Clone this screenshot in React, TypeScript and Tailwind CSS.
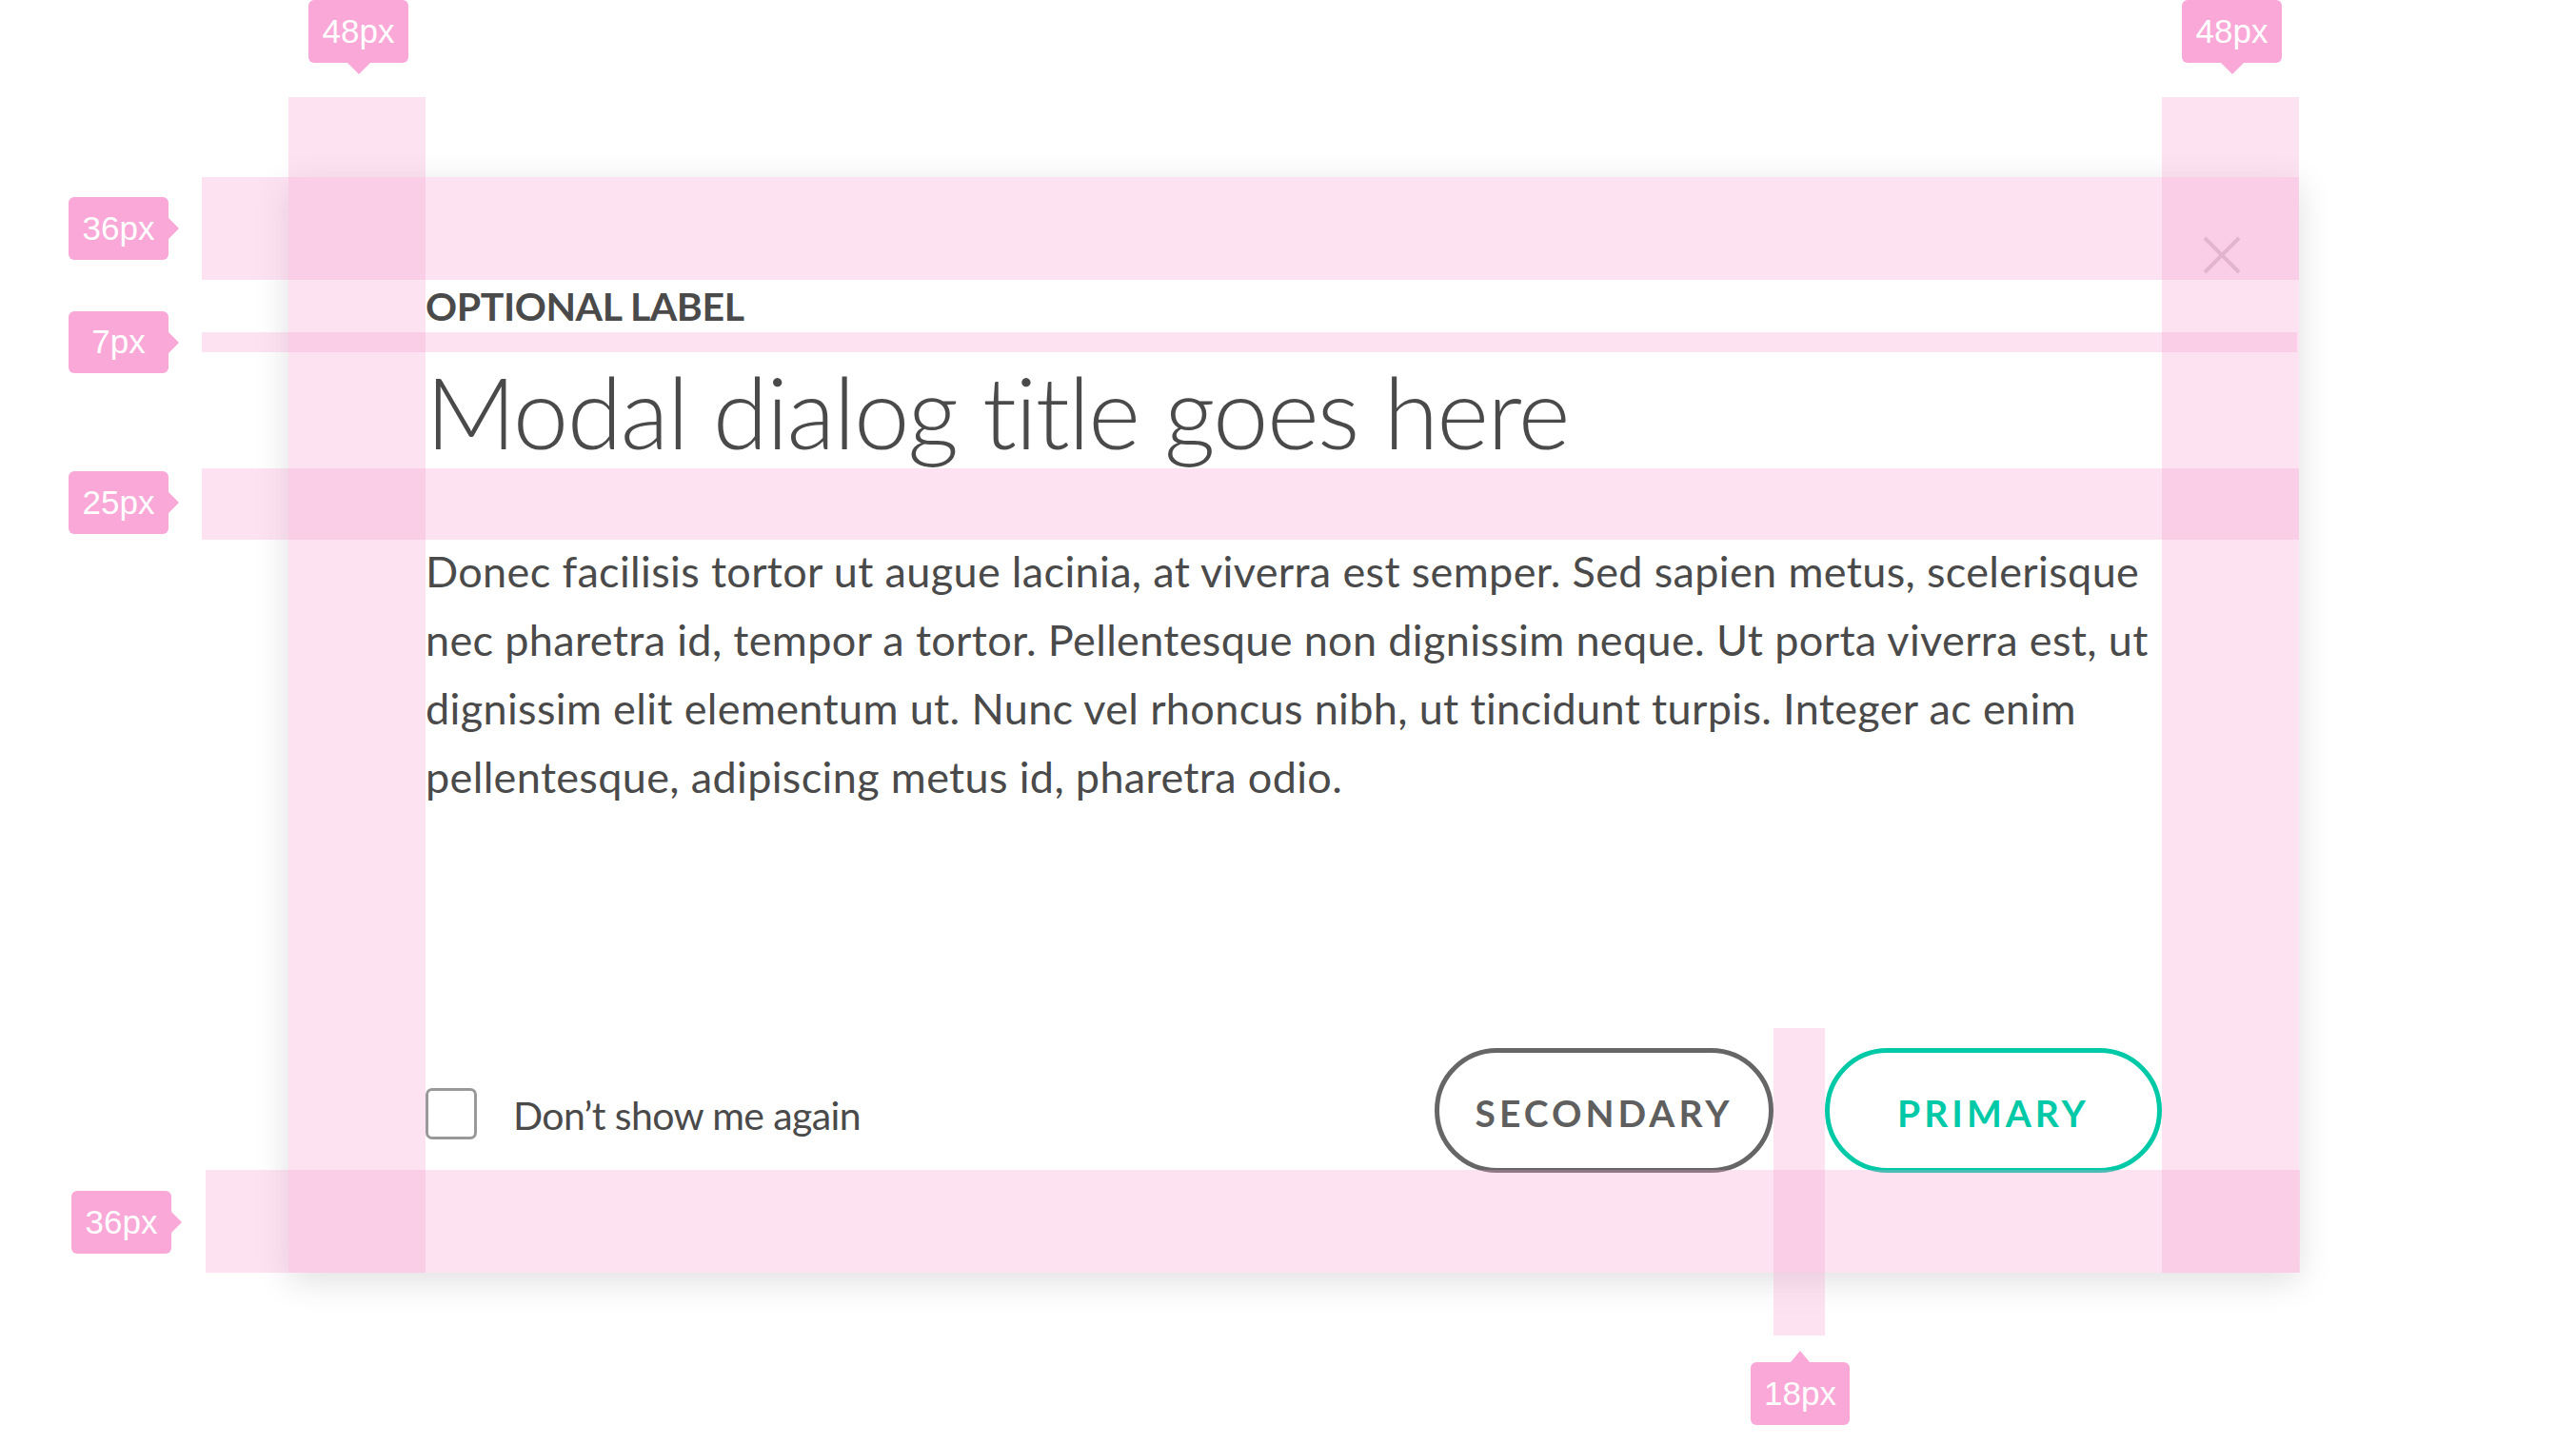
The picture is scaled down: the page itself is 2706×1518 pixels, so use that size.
import React from 'react';

const Band = ({ className }: { className: string }) => (
  <div className={`absolute bg-[rgba(249,160,210,0.3)] ${className}`} />
);

type Side = 'down' | 'right' | 'up';

const Tag = ({ text, side, className }: { text: string; side: Side; className: string }) => (
  <div
    className={`absolute flex items-center justify-center rounded-[6px] bg-[#f9a8d8] text-white text-[35px] font-['Liberation_Sans',Arial,sans-serif] ${className}`}
  >
    {text}
    {side === 'down' && (
      <span className="absolute left-1/2 -bottom-[12px] -translate-x-1/2 w-0 h-0 border-l-[12px] border-r-[12px] border-t-[12px] border-l-transparent border-r-transparent border-t-[#f9a8d8]" />
    )}
    {side === 'right' && (
      <span className="absolute top-1/2 -right-[11px] -translate-y-1/2 w-0 h-0 border-t-[11px] border-b-[11px] border-l-[11px] border-t-transparent border-b-transparent border-l-[#f9a8d8]" />
    )}
    {side === 'up' && (
      <span className="absolute left-1/2 -top-[12px] -translate-x-1/2 w-0 h-0 border-l-[10px] border-r-[10px] border-b-[12px] border-l-transparent border-r-transparent border-b-[#f9a8d8]" />
    )}
  </div>
);

const Modal = () => (
  <div className="relative flex flex-col w-[2112px] h-[1151px] bg-white px-[144px] pt-[108px] pb-[105px] shadow-[0_8px_34px_rgba(0,0,0,0.13)]">
    {/* close */}
    <button className="absolute top-[61px] right-[60px] w-[42px] h-[42px]">
      <svg viewBox="0 0 42 42" className="w-full h-full">
        <path d="M3 3 L39 39 M39 3 L3 39" stroke="#cccccc" strokeWidth="4" fill="none" />
      </svg>
    </button>

    <div className="h-[55px] text-[41px] leading-[55px] font-bold tracking-[-0.4px] text-[#4a4a4a]">
      OPTIONAL LABEL
    </div>
    <h1 className="mt-[21px] h-[122px] text-[105px] leading-[122px] font-light tracking-[-1.8px] text-[#4a4a4a]">
      Modal dialog title goes here
    </h1>
    <p className="mt-[72px] text-[45px] leading-[72px] text-[#4a4a4a] tracking-[0.35px]">
      Donec facilisis tortor ut augue lacinia, at viverra est semper. Sed sapien metus, scelerisque nec
      pharetra id, tempor a tortor. Pellentesque non dignissim neque. Ut porta viverra est, ut dignissim
      elit elementum ut. Nunc vel rhoncus nibh, ut tincidunt turpis. Integer ac enim pellentesque,
      adipiscing metus id, pharetra odio.
    </p>

    {/* footer */}
    <div className="mt-auto flex items-center justify-between h-[131px]">
      <label className="flex items-center gap-[38px] mt-[7px]">
        <span className="w-[54px] h-[54px] rounded-[7px] border-[3px] border-[#999999] bg-white" />
        <span className="pt-[4px] text-[41px] leading-[54px] tracking-[-0.6px] text-[#4a4a4a]">Don’t show me again</span>
      </label>
      <div className="flex gap-[54px]">
        <button className="w-[356px] h-[131px] pt-[5px] rounded-full border-[5px] border-[#666666] text-[39px] font-bold tracking-[4px] text-[#5f5f5f]">
          SECONDARY
        </button>
        <button className="w-[354px] h-[131px] pt-[5px] rounded-full border-[5px] border-[#00c9a7] text-[39px] font-bold tracking-[4px] text-[#00c9a7]">
          PRIMARY
        </button>
      </div>
    </div>
  </div>
);

export default function App() {
  return (
    <div className="relative w-[2706px] h-[1518px] overflow-hidden bg-white pl-[303px] pt-[186px] font-['Lato','Open_Sans',sans-serif]">
      <Modal />

      {/* spacing annotations laid over the dialog */}
      <Band className="left-[303px] top-[102px] w-[144px] h-[1235px]" />
      <Band className="left-[2271px] top-[102px] w-[144px] h-[1235px]" />
      <Band className="left-[212px] top-[186px] w-[2203px] h-[108px]" />
      <Band className="left-[212px] top-[349px] w-[2201px] h-[21px]" />
      <Band className="left-[212px] top-[492px] w-[2203px] h-[75px]" />
      <Band className="left-[216px] top-[1229px] w-[2200px] h-[108px]" />
      <Band className="left-[1863px] top-[1080px] w-[54px] h-[323px]" />

      <Tag text="48px" side="down" className="left-[324px] top-0 w-[105px] h-[66px]" />
      <Tag text="48px" side="down" className="left-[2292px] top-0 w-[105px] h-[66px]" />
      <Tag text="36px" side="right" className="left-[72px] top-[207px] w-[105px] h-[66px]" />
      <Tag text="7px" side="right" className="left-[72px] top-[327px] w-[105px] h-[65px]" />
      <Tag text="25px" side="right" className="left-[72px] top-[495px] w-[105px] h-[66px]" />
      <Tag text="36px" side="right" className="left-[75px] top-[1251px] w-[105px] h-[66px]" />
      <Tag text="18px" side="up" className="left-[1839px] top-[1431px] w-[104px] h-[66px]" />
    </div>
  );
}
